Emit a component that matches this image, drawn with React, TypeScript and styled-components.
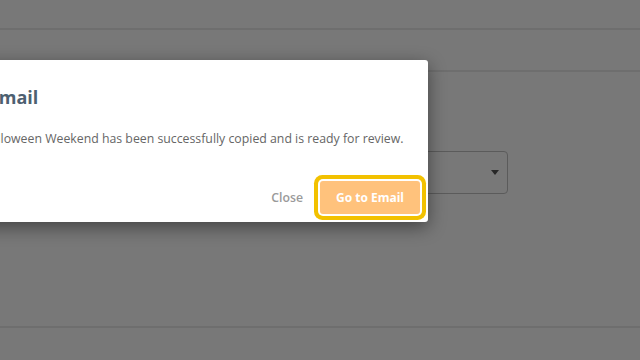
import styled, { createGlobalStyle } from "styled-components";

const GlobalStyle = createGlobalStyle`
  body {
    margin: 0;
    font-family: "Open Sans", "Liberation Sans", sans-serif;
    overflow: hidden;
  }
`;

const Page = styled.div`
  position: relative;
  width: 640px;
  height: 360px;
  background: #ffffff;
  overflow: hidden;
`;

const TopBar = styled.div`
  height: 28px;
  border-bottom: 2px solid #eaeaea;
`;

const SubBar = styled.div`
  height: 40px;
  border-bottom: 2px solid #eaeaea;
`;

const Content = styled.div`
  height: 256px;
  padding: 79px 132px 0 100px;
  box-sizing: border-box;
  border-bottom: 2px solid #eaeaea;
`;

const Select = styled.div`
  display: flex;
  align-items: center;
  justify-content: flex-end;
  height: 43px;
  padding-right: 8px;
  box-sizing: border-box;
  border: 1px solid #c2c2c2;
  border-radius: 4px;
`;

const Caret = styled.span`
  width: 0;
  height: 0;
  border-left: 4px solid transparent;
  border-right: 4px solid transparent;
  border-top: 5px solid #555;
`;

const Overlay = styled.div`
  position: absolute;
  inset: 0;
  background: rgba(0, 0, 0, 0.53);
`;

const Modal = styled.div`
  position: absolute;
  top: 60px;
  right: 212px;
  width: 535px;
  background: #ffffff;
  border-radius: 3px;
  box-shadow: 0 5px 18px rgba(0, 0, 0, 0.45);
  padding: 25px 8px 8px 24px;
  box-sizing: border-box;
`;

const Title = styled.h2`
  margin: 0;
  font-size: 18px;
  line-height: 24px;
  font-weight: 700;
  color: #4d6070;
`;

const Message = styled.p`
  margin: 20px 0 0;
  font-size: 12.3px;
  line-height: 20px;
  color: #666;
`;

const Footer = styled.div`
  display: flex;
  justify-content: flex-end;
  align-items: center;
  gap: 17px;
  margin-top: 32px;
`;

const TextButton = styled.button`
  border: 0;
  background: none;
  padding: 0;
  font-family: inherit;
  font-size: 12.3px;
  font-weight: 600;
  color: #9a9a9a;
  cursor: pointer;
`;

const PrimaryButton = styled.button`
  width: 100px;
  height: 33px;
  border: 0;
  border-radius: 3px;
  background: #ffc27c;
  color: #ffffff;
  font-family: inherit;
  font-size: 12px;
  font-weight: 700;
  box-shadow: 0 0 0 2px #ffffff, 0 0 0 6px #f2c100;
  cursor: pointer;
`;

export default function App() {
  return (
    <>
      <GlobalStyle />
      <Page>
        <TopBar />
        <SubBar />
        <Content>
          <Select>
            <Caret />
          </Select>
        </Content>
        <Overlay />
        <Modal>
          <Title>Copy of Email</Title>
          <Message>
            Your email Halloween Weekend has been successfully copied and is ready for review.
          </Message>
          <Footer>
            <TextButton>Close</TextButton>
            <PrimaryButton>Go to Email</PrimaryButton>
          </Footer>
        </Modal>
      </Page>
    </>
  );
}
